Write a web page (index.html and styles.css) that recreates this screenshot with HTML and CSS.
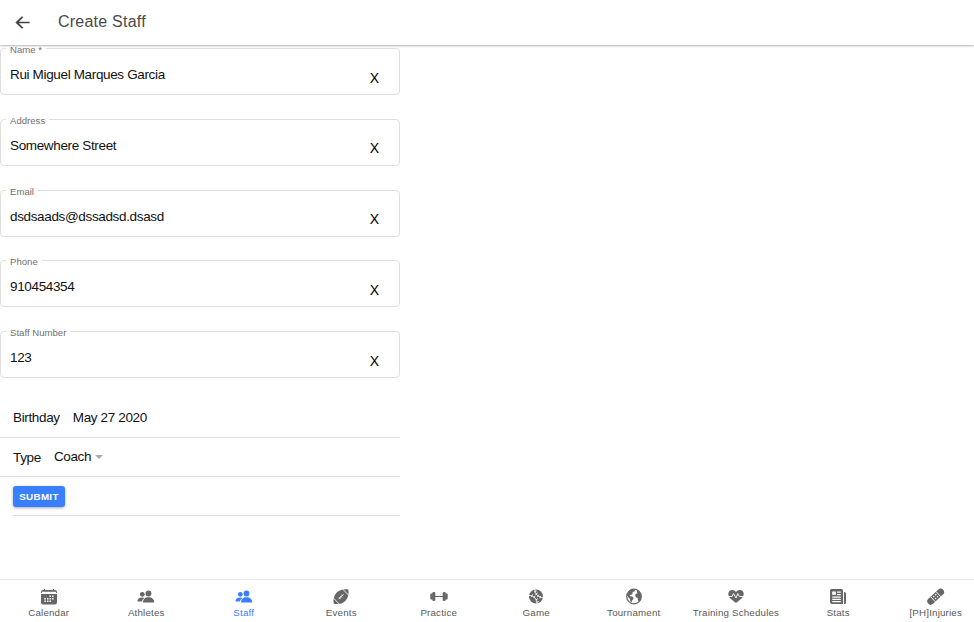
FILE: index.html
```html
<!DOCTYPE html>
<html lang="en">
<head>
<meta charset="utf-8">
<title>Create Staff</title>
<link rel="stylesheet" href="styles.css">
</head>
<body>
<header class="toolbar">
  <svg class="back" viewBox="0 0 24 24"><path d="M21 11H7.400l5.500-5.500L11.300 4l-8.300 8 8.300 8 1.600-1.500L7.400 13H21z"/></svg>
  <h1>Create Staff</h1>
</header>
<main>
  <form class="form">
    <div class="field"><label>Name *</label><span class="value">Rui Miguel Marques Garcia</span><span class="clear">X</span></div>
    <div class="field"><label>Address</label><span class="value">Somewhere Street</span><span class="clear">X</span></div>
    <div class="field"><label>Email</label><span class="value">dsdsaads@dssadsd.dsasd</span><span class="clear">X</span></div>
    <div class="field"><label>Phone</label><span class="value">910454354</span><span class="clear">X</span></div>
    <div class="field"><label>Staff Number</label><span class="value">123</span><span class="clear">X</span></div>
    <div class="row birthday"><span>Birthday</span><span>May 27 2020</span></div>
    <div class="row type"><span>Type</span><span class="select">Coach<i class="caret"></i></span></div>
    <div class="actions"><button type="button">SUBMIT</button></div>
  </form>
</main>
<nav class="tabs">
  <a class="tab"><svg viewBox="0 0 16 16"><path d="M0 5h16v8.500a2 2 0 0 1-2 2H2a2 2 0 0 1-2-2zM0 4V3a2 2 0 0 1 2-2h1V0h1.200v1h7.600V0H13v1h1a2 2 0 0 1 2 2v1z"/><path class="cut" d="M1 2.800h14v1.400H1zM8.500 6.500H10V8H8.500zM11 6.500h1.500V8H11zM3.300 9h1.500v1.500H3.300zM6 9h1.500v1.500H6zM8.500 9H10v1.500H8.500zM11 9h1.500v1.500H11zM3.300 11.600h1.500v1.500H3.300zM6 11.600h1.500v1.500H6zM8.500 11.600H10v1.500H8.500z"/></svg><span>Calendar</span></a>
  <a class="tab"><svg viewBox="0 0 16 16"><circle cx="10.500" cy="4.500" r="2.900"/><path d="M5 13.500c0-3.300 2-5.300 5.500-5.300s5.700 2 5.700 5.300z"/><circle cx="4.300" cy="5.300" r="2.400"/><path d="M-.5 12.500c0-2.500 1.700-4 4.800-4 1 0 1.700.2 2.300.5C5 9.800 4.200 11 4 12.500z"/></svg><span>Athletes</span></a>
  <a class="tab active"><svg viewBox="0 0 16 16"><circle cx="10.500" cy="4.500" r="2.900"/><path d="M5 13.500c0-3.300 2-5.300 5.500-5.300s5.700 2 5.700 5.300z"/><circle cx="4.300" cy="5.300" r="2.400"/><path d="M-.5 12.500c0-2.500 1.700-4 4.800-4 1 0 1.700.2 2.300.5C5 9.800 4.200 11 4 12.500z"/></svg><span>Staff</span></a>
  <a class="tab"><svg viewBox="0 0 16 16"><path d="M.7 14.800C-.2 10 1.200 6 4 3.200 7 .5 11-.3 15.300.4 16.200 5.600 14.800 9.600 12 12.200c-3 2.700-7 3.400-11.300 2.600z"/><path class="line thin" d="M9.500 0l6.200 6.200M.3 9l6.200 6.200"/><path class="line thin" d="M5.500 10.200l5-5M6 8.200L7.500 9.700M7.300 7l1.500 1.500M8.500 5.700L10 7.200"/></svg><span>Events</span></a>
  <a class="tab"><svg class="wide" viewBox="0 0 18 16"><rect x="2.300" y="3" width="3" height="9" rx="1.300"/><rect x="12.700" y="3" width="3" height="9" rx="1.300"/><rect x=".3" y="4.500" width="2.500" height="6" rx="1"/><rect x="15.200" y="4.500" width="2.500" height="6" rx="1"/><path d="M5 7h8v1H5z"/></svg><span>Practice</span></a>
  <a class="tab"><svg viewBox="0 0 16 16"><circle cx="8" cy="7.500" r="7"/><path class="line thin" d="M7 .3C6.500 5 11 9 15.200 8.500M.8 6.500C5.500 6 9.500 10.500 9 14.700"/><path class="line thin" d="M6 3.100l2.600-1M7.300 5.500L9.700 4M9.300 7.900l1.500-2.200M11.800 9.400l1-2.600M3.500 8l1-2.600M5.600 9l1.600-2.300M7.500 11.100l2.400-1.500M8.200 13.300l2.600-.8"/></svg><span>Game</span></a>
  <a class="tab"><svg viewBox="0 0 16 16"><g transform="translate(0 -.5)"><circle class="ring" cx="8" cy="8" r="7.300"/><path d="M2.300 3.500C4 1.500 6 .7 8 .8l1.300 1-1 1.300-1.800.4.300 1.300-1.500 1.400-1.600.2.300 1.300 2 .3 1.600 1.300-.4 1.500-1.200 1.200-.4 2-1-.8-.8-2.900-1.500-1.500-1.500-2zM11.300 1.600l2.600 2.200 1.300 3.200-.4 3.500-1.700 2.500-1.200-1-.2-2.600-1.600-.6-1-1.500.8-2 1.800-.6-.9-1z"/></g></svg><span>Tournament</span></a>
  <a class="tab training"><svg viewBox="0 0 16 16"><path d="M8 14C5 11.700.3 9 .3 5.100.3 2.500 2.100 1 4.200 1c1.600 0 3 .8 3.800 2.200C8.800 1.800 10.200 1 11.800 1c2.100 0 3.900 1.500 3.900 4.100C15.700 9 11 11.700 8 14z"/><path class="line thin" d="M0 7.500h4l1.500-3L8 9l1.800-4.500 1.500 3H16"/></svg><span>Training Schedules</span></a>
  <a class="tab"><svg viewBox="0 0 16 16"><path d="M1.500 0h10A1.500 1.500 0 0 1 13 1.500V15H2a2 2 0 0 1-2-2V1.500A1.500 1.500 0 0 1 1.500 0zM14 3h.5A1.500 1.500 0 0 1 16 4.500v9a1.500 1.500 0 0 1-2 1.400z"/><path class="cut" d="M2.200 2.600h3.600V6H2.200zM7 2.600h3.800v1.200H7zM7 5h3.800v1.200H7zM2.200 7.500h8.600v1.200H2.200zM2.200 9.800h8.600V11H2.200zM2.200 12.100h8.600v1.200H2.200z"/></svg><span>Stats</span></a>
  <a class="tab"><svg class="wide" viewBox="0 0 18 16"><g transform="rotate(-43 9 8) translate(0 -.5)"><rect x="-1.200" y="4.600" width="20.400" height="6.800" rx="3.400"/><path class="line thin" d="M5.300 4.500v7M12.700 4.500v7"/><path class="cut" d="M7 6h1.300v1.300H7zM9.700 6H11v1.300H9.700zM7 8.700h1.300V10H7zM9.700 8.700H11V10H9.700z"/></g></svg><span>[PH]Injuries</span></a>
</nav>
</body>
</html>
```
FILE: styles.css
```css
* { box-sizing: border-box; }
body {
  margin: 0;
  height: 622px;
  overflow: hidden;
  display: flex;
  flex-direction: column;
  background: #fff;
  color: #111;
  font-family: "Liberation Sans", Arial, sans-serif;
  font-size: 13.500px;
  letter-spacing: -.35px;
}
.toolbar {
  height: 45px;
  flex: none;
  display: flex;
  align-items: center;
  padding: 0 0 1px 13px;
  background: #fff;
  box-shadow: 0 1px 2px rgba(0, 0, 0, .3);
  position: relative;
  z-index: 2;
}
.back { width: 19px; height: 19px; fill: #424242; margin-right: 26px; }
h1 { margin: 0; font-size: 16px; font-weight: 400; color: #4a4a4a; letter-spacing: .23px; }
main { flex: 1; min-height: 0; padding-top: 3px; }
.form { width: 400px; }
.field {
  position: relative;
  height: 47px;
  margin-bottom: 23.800px;
  padding: 6px 20px 0 9px;
  border: 1px solid #dedede;
  border-radius: 4px;
  display: flex;
  align-items: center;
  justify-content: space-between;
}
.field label {
  position: absolute;
  top: -5px;
  left: 5px;
  padding: 0 4px;
  background: #fff;
  color: #707070;
  font-size: 9.600px;
  line-height: 12px;
  letter-spacing: 0;
}
.clear { font-size: 14px; letter-spacing: 0; margin-top: 6px; color: #000; }
.row {
  display: flex;
  align-items: center;
  gap: 13px;
  height: 39px;
  padding-left: 13px;
  border-bottom: 1px solid #dedede;
}
.birthday { margin-top: -4px; height: 40px; }
.type { padding-top: 2px; }
.select { display: flex; align-items: center; gap: 4px; margin-bottom: 2px; }
.caret { border: 4px solid transparent; border-top-color: #aaa; border-bottom: 0; }
.actions { margin-left: 13px; height: 39px; padding-top: 9px; border-bottom: 1px solid #dedede; }
button {
  display: block;
  width: 52px;
  height: 21px;
  padding: 0;
  border: 0;
  border-radius: 3px;
  background: #3880ff;
  color: #fff;
  font: bold 9.750px "Liberation Sans", Arial, sans-serif;
  letter-spacing: .35px;
  box-shadow: 0 1px 3px rgba(0, 0, 0, .35);
}
.tabs {
  flex: none;
  display: flex;
  height: 43px;
  border-top: 1px solid #e7e7e7;
  background: #fff;
}
.tab {
  flex: 0 0 97.500px;
  display: flex;
  flex-direction: column;
  align-items: center;
  padding-top: 9px;
  color: #595959;
  font-size: 9.750px;
  line-height: 12px;
  letter-spacing: .18px;
  white-space: nowrap;
}
.training { flex-basis: 107px; }
.tab svg { width: 16px; height: 16px; margin-bottom: 2px; fill: #666; overflow: visible; }
.tab svg.wide { width: 18px; }
.tab.active { color: #3880ff; }
.tab.active svg { fill: #3880ff; }
.tab .cut { fill: #fff; }
.tab .line { fill: none; stroke: #fff; stroke-width: 1.200; }
.tab .thin { stroke-width: .9; }
.tab .ring { fill: none; stroke: #666; stroke-width: 1.200; }
```
